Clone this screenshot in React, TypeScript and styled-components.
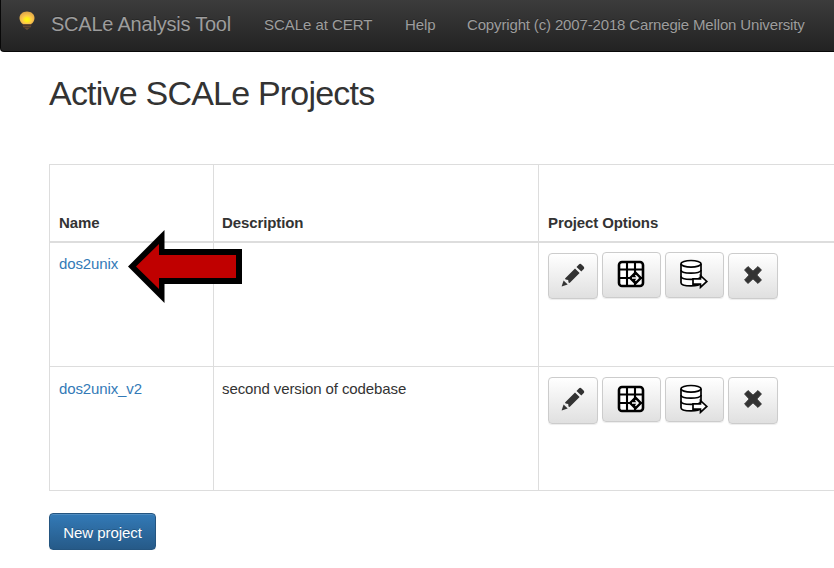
import React from "react";
import styled, { createGlobalStyle } from "styled-components";

const Global = createGlobalStyle`
  * { box-sizing: border-box; }
  body {
    margin: 0;
    background: #fff;
    color: #333;
    font: 15px/21px "Liberation Sans", Arial, sans-serif;
    overflow: hidden;
  }
`;

const Navbar = styled.nav`
  display: flex;
  align-items: center;
  height: 52px;
  padding: 0 0 2px 18px;
  background: linear-gradient(#3c3c3c, #222);
  border-left: 1px solid #080808;
  border-bottom: 1px solid #080808;
  border-radius: 0 0 0 4px;
  color: #9d9d9d;
  text-shadow: 0 -1px 0 rgba(0, 0, 0, 0.25);
  white-space: nowrap;
`;

const Bulb = styled.svg`
  display: block;
  width: 16px;
  height: 20px;
  margin: -7px 16px 0 0;
`;

const Brand = styled.a`
  width: 213px;
  font-size: 20px;
  letter-spacing: -0.22px;
`;

const NavLink = styled.a<{ $width: number; $tracking?: number }>`
  width: ${(p) => p.$width}px;
  letter-spacing: ${(p) => p.$tracking ?? 0}px;
`;

const Page = styled.main`
  padding: 20px 0 0 49px;
`;

const Title = styled.h1`
  margin: 0;
  height: 92px;
  font-size: 34px;
  font-weight: 400;
  letter-spacing: -0.79px;
  line-height: 42px;
  white-space: nowrap;
`;

const Table = styled.div`
  display: grid;
  grid-template-columns: 164px 325px 1fr;
  grid-template-rows: 78px 124px 124px;
  height: 327px;
  border-top: 1px solid #ddd;
  border-left: 1px solid #ddd;
`;

const Cell = styled.div`
  padding: 11px 8px;
  border-right: 1px solid #ddd;
  border-bottom: 1px solid #ddd;
  letter-spacing: -0.1px;
  &:nth-child(3n) { border-right: 0; }
  &:nth-child(3n + 1) { padding-left: 9px; }
  &:nth-child(n + 4):nth-child(-n + 6) { padding-top: 10px; }
`;

const HeadCell = styled(Cell)`
  display: flex;
  align-items: flex-end;
  padding: 8px;
  border-bottom: 2px solid #ddd;
  font-weight: 700;
  &:nth-child(3) { padding-left: 9px; }
`;

const ProjectLink = styled.a`
  color: #337ab7;
  letter-spacing: -0.12px;
`;

const OptionList = styled.div`
  display: flex;
  align-items: flex-start;
  gap: 4px;
  margin: -1px 0 0 1px;
`;

const IconButton = styled.button<{ $wide?: boolean; $drop?: number; $height: number; $lift: number }>`
  display: flex;
  align-items: center;
  justify-content: center;
  flex: none;
  width: ${(p) => (p.$wide ? 59 : 50)}px;
  height: ${(p) => p.$height}px;
  margin: ${(p) => p.$drop ?? 0}px 0 0;
  padding: 0 ${(p) => (p.$wide ? 1 : 0)}px ${(p) => p.$lift}px 0;
  border: 1px solid #ccc;
  border-radius: 4px;
  background: linear-gradient(#fff, #e0e0e0);
  box-shadow: inset 0 1px 0 rgba(255, 255, 255, 0.15), 0 1px 1px rgba(0, 0, 0, 0.075);
  svg { display: block; }
`;

const NewProject = styled.button`
  display: block;
  width: 107px;
  height: 37px;
  margin-top: 22px;
  padding: 2px 0 0;
  border: 1px solid #245580;
  border-radius: 4px;
  background: linear-gradient(#337ab7, #265a88);
  box-shadow: inset 0 1px 0 rgba(255, 255, 255, 0.15), 0 1px 1px rgba(0, 0, 0, 0.075);
  color: #fff;
  font: inherit;
  letter-spacing: -0.05px;
  text-shadow: 0 -1px 0 rgba(0, 0, 0, 0.2);
`;

const Pointer = styled.svg`
  position: absolute;
  left: 126px;
  top: 228px;
`;

const Pencil = () => (
  <svg width="26" height="26" viewBox="0 0 26 26" fill="#333">
    <path d="M1.6 24.4 3.6 18.4 7.7 22.4Z" />
    <path d="M5 16.4 15 6.4 19.6 11 9.6 21 8.5 20.5 8.2 18 5.6 17.6Z" />
    <path d="M16.5 4.9 18.9 2.5Q20.2 1.2 21.5 2.5L23.8 4.8Q24.8 6 23.8 7.1L21.3 9.6Z" />
  </svg>
);

const GridExport = () => (
  <svg width="28" height="28" viewBox="0 0 28 28">
    <rect x="2" y="2" width="24" height="24" rx="3" fill="#fff" stroke="#000" strokeWidth="2.6" />
    <path d="M10 2V26M18 2V26M2 9.5H26M2 18H26" stroke="#000" strokeWidth="2.1" />
    <path d="M18.5 12.6 24 18 18.5 23.4 13 18Z" fill="#000" stroke="#000" strokeWidth="2.2" strokeLinejoin="round" />
    <path d="M15 18H21M18.4 15.2 21.2 18 18.4 20.8" fill="none" stroke="#fff" strokeWidth="1.3" />
  </svg>
);

const DatabaseExport = () => (
  <svg width="30" height="30" viewBox="0 0 30 30" fill="#fff" stroke="#000" strokeWidth="1.7">
    <path d="M2 5V23.8C2 28 22 28 22 23.8V5" />
    <ellipse cx="12" cy="4.8" rx="10" ry="3.3" />
    <path d="M2 11C2 15.2 22 15.2 22 11M2 17.2C2 21.4 22 21.4 22 17.2" fill="none" />
    <path d="M14 19.8H21.5V16.6L27.8 22.5 21.5 28.3V25.1H14Z" />
  </svg>
);

const Cross = () => (
  <svg width="20" height="20" viewBox="0 0 20 20" fill="#333">
    <path d="M5 1.6 10 6.2 15 1.6 18.4 5 13.8 10 18.4 15 15 18.4 10 13.8 5 18.4 1.6 15 6.2 10 1.6 5Z" stroke="#333" strokeLinejoin="round" />
  </svg>
);

const ProjectOptions = ({ raised }: { raised?: boolean }) => {
  const drop = raised ? 1 : 0;
  const outer = raised ? 46 : 47;
  const inner = raised ? 46 : 45;
  const lift = raised ? 2 : 3;
  const innerLift = raised ? 2 : 1;
  return (
    <Cell>
      <OptionList>
        <IconButton $height={outer} $drop={drop} $lift={lift} aria-label="Edit"><Pencil /></IconButton>
        <IconButton $wide $height={inner} $lift={innerLift} aria-label="Export table"><GridExport /></IconButton>
        <IconButton $wide $height={inner} $lift={innerLift} aria-label="Export database"><DatabaseExport /></IconButton>
        <IconButton $height={outer} $drop={drop} $lift={lift} aria-label="Delete"><Cross /></IconButton>
      </OptionList>
    </Cell>
  );
};

export default function App() {
  return (
    <>
      <Global />
      <Navbar>
        <Bulb viewBox="0 0 16 20">
          <defs>
            <radialGradient id="glow" cx="50%" cy="65%" r="60%">
              <stop offset="0" stopColor="#fffb10" />
              <stop offset="0.3" stopColor="#ffe920" />
              <stop offset="0.5" stopColor="#ffc94a" />
              <stop offset="1" stopColor="#e0a848" />
            </radialGradient>
          </defs>
          <path d="M3.5 12H12.5L12 16 8 19 4 16Z" fill="#6b4c34" />
          <path d="M3.5 14.6H12.5M4.5 16.6H11.5" stroke="#39302a" strokeWidth="0.7" />
          <path d="M8 .5C3.6 .5 .5 3.4 .5 7C.5 10 2.2 12.3 4 13H12C13.8 12.3 15.5 10 15.5 7C15.5 3.4 12.4 .5 8 .5Z" fill="url(#glow)" />
        </Bulb>
        <Brand>SCALe Analysis Tool</Brand>
        <NavLink $width={141} $tracking={-0.05}>SCALe at CERT</NavLink>
        <NavLink $width={62} $tracking={-0.1}>Help</NavLink>
        <NavLink $width={340} $tracking={-0.15}>Copyright (c) 2007-2018 Carnegie Mellon University</NavLink>
      </Navbar>
      <Page>
        <Title>Active SCALe Projects</Title>
        <Table>
          <HeadCell>Name</HeadCell>
          <HeadCell>Description</HeadCell>
          <HeadCell>Project Options</HeadCell>
          <Cell><ProjectLink>dos2unix</ProjectLink></Cell>
          <Cell />
          <ProjectOptions raised />
          <Cell><ProjectLink>dos2unix_v2</ProjectLink></Cell>
          <Cell>second version of codebase</Cell>
          <ProjectOptions />
        </Table>
        <NewProject>New project</NewProject>
      </Page>
      <Pointer width="118" height="78" viewBox="126 228 118 78">
        <path d="M128 266.5 164.5 230V249H242V284H164.5V303Z" fill="#000" />
        <path d="M136 266.5 159 244V255H236V278H159V289Z" fill="#c00000" />
      </Pointer>
    </>
  );
}
